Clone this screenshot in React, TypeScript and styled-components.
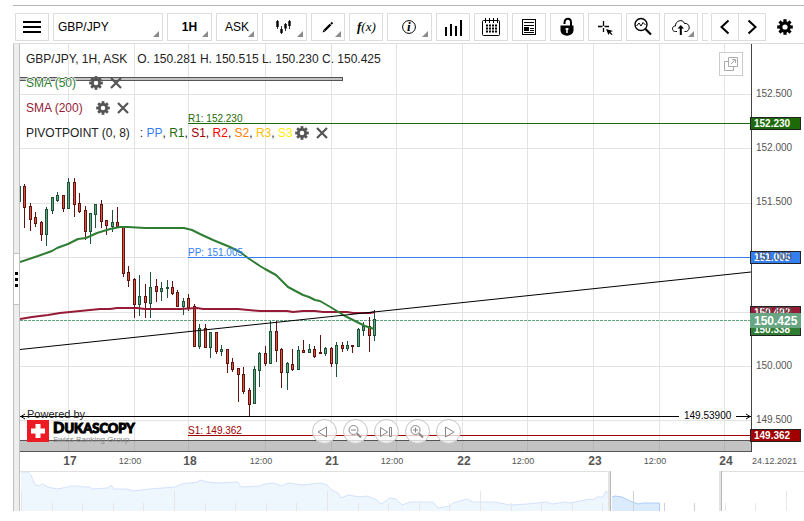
import React from "react";
import styled, { createGlobalStyle } from "styled-components";

const Global = createGlobalStyle`
  * { box-sizing: border-box; }
  body { margin: 0; background: #fff; font: 12px/16px "Liberation Sans", Arial, sans-serif; color: #222; }
  button, select { font: inherit; color: inherit; }
`;

const Page = styled.div`
  padding: 5px 0 0 13px;
`;

const Toolbar = styled.header`
  display: flex;
  padding: 7px 0 2px 2px;
  border-top: 1px solid #b4b4b4;
  border-bottom: 1px solid #dcdcdc;
`;

const Tools = styled.div`
  display: flex;
  flex: 1;
  min-width: 0;
  gap: 4px;
  margin-right: 3px;
  overflow: hidden;
`;

const Cell = styled.div<{ $w: number }>`
  position: relative;
  flex: 0 0 ${(p) => p.$w}px;
  height: 28px;
`;

const ToolButton = styled.button`
  display: flex;
  align-items: center;
  justify-content: center;
  width: 100%;
  height: 100%;
  padding: 0;
  border: 1px solid #dcdcdc;
  background: #fff;
  color: #000;
`;

const ToolSelect = styled.select<{ $bold?: boolean; $center?: boolean }>`
  width: 100%;
  height: 100%;
  padding: 0 4px;
  border: 1px solid #dcdcdc;
  border-radius: 0;
  background: #fff;
  color: #000;
  appearance: none;
  font-weight: ${(p) => (p.$bold ? 700 : 400)};
  text-align-last: ${(p) => (p.$center ? "center" : "left")};
`;

const Corner = styled.span`
  position: absolute;
  right: 4px;
  bottom: 4px;
  border-left: 6px solid transparent;
  border-bottom: 6px solid #8c8c8c;
  pointer-events: none;
`;

const Pager = styled.div`
  display: grid;
  grid-template-columns: 27px 28px;
  height: 28px;
  button + button { width: 28px; }
  button:first-child { width: 28px; }
`;

const SettingsButton = styled.button`
  display: flex;
  align-items: center;
  justify-content: center;
  width: 38px;
  height: 28px;
  padding: 0;
  border: 0;
  background: none;
  && { color: #000; }
`;

const Body = styled.main`
  display: grid;
  grid-template-columns: 7px minmax(0, 1fr);
`;

const Splitter = styled.div`
  display: flex;
  flex-direction: column;
  padding-top: 209px;
  border: solid #c0c0c0;
  border-width: 0 1px;
  background: #eee;
`;

const Grip = styled.button`
  display: flex;
  flex-direction: column;
  align-items: center;
  justify-content: center;
  gap: 3px;
  width: 100%;
  height: 52px;
  padding: 0;
  border: solid #c0c0c0;
  border-width: 1px 0;
  background: #fff;
  i { width: 3px; height: 3px; background: #000; }
`;

const Plot = styled.section`
  position: relative;
`;

const Drawing = styled.svg`
  display: block;
  width: 100%;
  height: auto;
  font-family: "Liberation Sans", Arial, sans-serif;
`;

const Legend = styled.div`
  position: absolute;
  top: 7px;
  left: 6px;
  display: grid;
  text-shadow: 1px 0 #fff, -1px 0 #fff, 0 1px #fff, 0 -1px #fff, 0 0 2px #fff;
`;

const Indicators = styled.div`
  display: grid;
  gap: 9px;
  margin-top: 8px;
`;

const LegendRow = styled.div<{ $color?: string }>`
  display: flex;
  align-items: center;
  height: 16px;
  color: ${(p) => p.$color ?? "#222"};
  white-space: pre;
`;

const LegendActions = styled.span<{ $gap: number }>`
  display: flex;
  gap: 6px;
  margin-left: ${(p) => p.$gap}px;
`;

const PlainButton = styled.button`
  display: flex;
  padding: 0;
  border: 0;
  background: none;
  && { color: #555; }
`;

const Tint = styled.span<{ $c: string }>`
  color: ${(p) => p.$c};
`;

const PopOut = styled.button`
  position: absolute;
  top: 8px;
  right: 61px;
  display: flex;
  align-items: center;
  justify-content: center;
  width: 24px;
  height: 24px;
  padding: 0;
  border: 1px solid #ccc;
  background: rgba(255, 255, 255, 0.8);
  && { color: #aaa; }
`;

const Navigation = styled.nav`
  position: absolute;
  right: 52px;
  bottom: 27px;
  left: 0;
  display: flex;
  justify-content: center;
  gap: 6px;
`;

const RoundButton = styled.button`
  display: flex;
  align-items: center;
  justify-content: center;
  width: 25px;
  height: 25px;
  padding: 0;
  border: 1px solid #c4c4c4;
  border-radius: 50%;
  background: rgba(255, 255, 255, 0.75);
  && { color: #888; }
`;

const Brand = styled.a`
  position: absolute;
  bottom: 26px;
  left: 7px;
  color: #222;
  text-decoration: none;
`;

const Powered = styled.div`
  font-size: 11px;
  line-height: 12px;
`;

const BrandRow = styled.div`
  display: flex;
  gap: 4px;
`;

const BrandName = styled.div`
  color: #000;
  font: 900 13px/14px Lato, sans-serif;
  -webkit-text-stroke: 1px #000;
  &::first-letter { font-size: 15px; }
`;

const Tagline = styled.div`
  color: #888;
  font-size: 8px;
  line-height: 10px;
`;

function Gear({ size }: { size: number }) {
  return (
    <svg width={size} height={size} viewBox="0 0 16 16" aria-hidden="true">
      <circle cx="8" cy="8" r="4.2" fill="none" stroke="currentColor" strokeWidth="3.2" />
      {[0, 45, 90, 135, 180, 225, 270, 315].map((a) => (
        <rect key={a} x="6.4" y="0.2" width="3.2" height="3.4" fill="currentColor" transform={`rotate(${a} 8 8)`} />
      ))}
    </svg>
  );
}

function Cross() {
  return (
    <svg width="14" height="14" viewBox="0 0 14 14" aria-hidden="true">
      <path d="M2 2L12 12M12 2L2 12" stroke="currentColor" strokeWidth="2.2" />
    </svg>
  );
}

function Glyph({ children, w = 20 }: { children: React.ReactNode; w?: number }) {
  return (
    <svg width={w} height="20" viewBox={`0 0 ${w} 20`} fill="none" stroke="currentColor" aria-hidden="true">
      {children}
    </svg>
  );
}

const icons = {
  menu: <Glyph><path d="M1 5H19M1 10H19M1 15H19" strokeWidth="2" /></Glyph>,
  candles: (
    <Glyph>
      <path d="M2.500 3V12M6.500 9V17M10.500 6V14M14.500 3V12" strokeWidth="0.800" />
      <path d="M2.500 4V10M6.500 12V16M10.500 7V11.500M14.500 4V9" strokeWidth="2.400" />
    </Glyph>
  ),
  pencil: (
    <Glyph>
      <path d="M6.500 13.500L12.500 7.500" strokeWidth="2.400" />
      <path d="M4.500 15.500L5.500 12.800L7.300 14.500Z" fill="currentColor" stroke="none" />
      <path d="M13 7L14.500 5.500" strokeWidth="2" />
    </Glyph>
  ),
  fx: (
    <Glyph w={24}>
      <text x="3" y="14" fill="currentColor" stroke="none" fontFamily="Liberation Serif, serif" fontSize="13" fontStyle="italic">
        <tspan fontWeight="700">f</tspan>(x)
      </text>
    </Glyph>
  ),
  info: (
    <Glyph>
      <circle cx="9" cy="10" r="6.400" />
      <text x="7" y="14" fill="currentColor" stroke="none" fontFamily="Liberation Serif, serif" fontSize="13" fontStyle="italic" fontWeight="700">i</text>
    </Glyph>
  ),
  bars: <Glyph><path d="M3 19V10M8 19V7M13 19V9M18 19V3" strokeWidth="2" /></Glyph>,
  calendar: (
    <Glyph>
      <rect x="1.500" y="3.500" width="17" height="15" rx="1" />
      <path d="M4.500 1V6M8.500 1V6M12.500 1V6M16.500 1V6" />
      <path d="M5 8.500H16M5 11.500H16M5 14.500H16" strokeWidth="2" strokeDasharray="2 1" />
    </Glyph>
  ),
  news: (
    <Glyph>
      <rect x="3.500" y="2.500" width="13" height="15" />
      <path d="M5 5.500H15M5 8.500H15M11 11.500H15M11 13.500H15M5 15.500H15" />
      <rect x="5" y="10" width="5" height="4" fill="currentColor" stroke="none" />
    </Glyph>
  ),
  lock: (
    <Glyph>
      <path d="M7.500 7V5.500C8 0.500 14 0.500 14 5.500V10" strokeWidth="2" />
      <path d="M3.500 8.500H16.500V13C16.500 20.500 3.500 20.500 3.500 13Z" fill="currentColor" stroke="none" />
      <path d="M10 11V16M8.500 12H11.500" stroke="#fff" strokeWidth="1.500" />
    </Glyph>
  ),
  crosshair: (
    <Glyph>
      <path d="M8.500 4V9M8.500 11V15M3 9.500H7.500M9.500 9.500H14" strokeWidth="1.300" />
      <path d="M11 12L18 14L15.500 15L17.500 17.500L16.500 18L14.500 16L13.500 18Z" fill="currentColor" stroke="none" />
    </Glyph>
  ),
  zoomChart: (
    <Glyph>
      <circle cx="8" cy="7.500" r="6" strokeWidth="1.400" />
      <path d="M3.500 9L6 6L8 9L10 5.500L12.500 8" />
      <path d="M12.500 12L18 17.500" strokeWidth="2.200" />
    </Glyph>
  ),
  cloud: (
    <Glyph>
      <path d="M6 14.500H4.500C0 14.500 1 8.500 4.500 9C4 3.500 12 1.500 13.500 6.500C18.500 5.500 20 13 15.500 14.500H13.500" />
      <path d="M9.800 18V10" strokeWidth="2" />
      <path d="M6.500 11.500L9.800 8L13 11.500Z" fill="currentColor" stroke="none" />
    </Glyph>
  ),
  left: <Glyph><path d="M13.500 3.500L6.500 10L13.500 16.500" strokeWidth="2" /></Glyph>,
  right: <Glyph><path d="M6.500 3.500L13.500 10L6.500 16.500" strokeWidth="2" /></Glyph>,
};

function Tool({ icon, label, w = 34, menu }: { icon: React.ReactNode; label: string; w?: number; menu?: boolean }) {
  return (
    <Cell $w={w}>
      <ToolButton aria-label={label}>{icon}</ToolButton>
      {menu && <Corner />}
    </Cell>
  );
}

// x, high, body top, body bottom, low, rising
type Candle = [number, number, number, number, number, number];
const candles: Candle[] = [
  [24, 184, 186, 207, 228, 0], [30, 203, 206, 219, 231, 0], [35, 212, 217, 223, 227, 0], [41, 221, 222, 234, 241, 0],
  [46, 207, 209, 234, 246, 1], [52, 197, 197, 210, 214, 1], [57, 192, 195, 200, 202, 1], [63, 195, 195, 208, 212, 0],
  [68, 178, 182, 208, 209, 1], [74, 178, 182, 204, 217, 0], [79, 193, 203, 211, 213, 0], [85, 206, 210, 231, 240, 0],
  [90, 213, 213, 231, 244, 1], [95, 204, 204, 214, 228, 1], [101, 200, 204, 221, 228, 0], [106, 220, 220, 225, 235, 0],
  [112, 210, 222, 226, 232, 1], [117, 207, 222, 226, 228, 0], [123, 226, 226, 273, 277, 0], [128, 266, 272, 280, 287, 0],
  [134, 278, 279, 304, 318, 0], [139, 275, 296, 304, 316, 1], [145, 284, 296, 302, 318, 0], [150, 272, 287, 303, 318, 1],
  [156, 279, 286, 291, 302, 0], [161, 282, 288, 291, 301, 1], [167, 280, 287, 288, 298, 1], [172, 281, 287, 293, 295, 0],
  [177, 290, 292, 306, 307, 0], [183, 298, 301, 306, 315, 1], [188, 294, 298, 307, 311, 0], [194, 304, 306, 346, 347, 0],
  [199, 324, 328, 346, 349, 1], [205, 324, 328, 347, 348, 0], [210, 332, 332, 347, 358, 1], [216, 332, 332, 351, 354, 0],
  [221, 345, 349, 351, 356, 1], [227, 349, 349, 363, 373, 0], [232, 358, 362, 369, 372, 0], [238, 368, 368, 374, 402, 0],
  [243, 367, 374, 391, 394, 0], [249, 388, 390, 404, 416, 0], [254, 366, 369, 403, 404, 1], [259, 352, 353, 370, 387, 1],
  [265, 346, 353, 363, 366, 0], [270, 321, 331, 363, 364, 1], [276, 321, 331, 350, 362, 0], [281, 348, 349, 372, 388, 0],
  [287, 362, 363, 372, 390, 1], [292, 349, 364, 369, 371, 0], [298, 346, 350, 369, 370, 1], [303, 340, 350, 352, 353, 0],
  [309, 344, 349, 352, 353, 1], [314, 346, 349, 356, 358, 0], [320, 335, 352, 353, 354, 0], [325, 347, 348, 353, 356, 1],
  [331, 347, 348, 363, 367, 0], [336, 342, 345, 363, 377, 1], [342, 342, 345, 348, 352, 0], [347, 341, 345, 348, 351, 1],
  [352, 345, 345, 346, 353, 0], [358, 328, 329, 346, 347, 1], [363, 322, 326, 330, 336, 1], [369, 317, 326, 335, 352, 0],
  [374, 310, 319, 335, 341, 1],
];

const sma50 =
  "20,262 38,256 52,251 57,248 68,244 78,239 86,238 97,233 110,229 120,227 128,227 145,228 162,228 173,228 184,228 192,230 200,234 213,240 230,247 240,252 248,258 260,266 265,269 276,275 282,281 288,287 303,295 309,297 315,300 320,301 332,308 345,316 357,322 365,326 374,329";
const sma200 =
  "20,319 32,317 48,315 60,313 70,312 80,311 100,309 110,309 117,308 137,308 145,309 180,309 197,308 203,309 238,309 260,311 287,311 293,312 303,311 315,311 323,312 347,312 353,313 370,313 375,312";

const columns = [68, 134, 188, 265, 331, 396, 462, 527, 593, 659, 724];
const rows = [94, 148, 203, 257, 312, 366, 420];
const priceLabels: [string, number][] = [
  ["152.500", 94], ["152.000", 148], ["151.500", 202], ["151.000", 257], ["150.500", 312], ["150.000", 366], ["149.500", 420],
];
const days: [string, number][] = [["17", 70], ["18", 190], ["21", 332], ["22", 464], ["23", 595], ["24", 726]];
const noons = [130, 261, 392, 523, 655];

function PriceTag({ y, fill, text }: { y: number; fill: string; text: string }) {
  return (
    <g>
      <rect x="750.5" y={y + 0.5} width="50" height="12" fill={fill} stroke="#222" />
      <text x="754" y={y + 10} fontSize="10" fontWeight="700" fill="#fff">{text}</text>
    </g>
  );
}

function PriceChart() {
  return (
    <Drawing viewBox="20 44 784 427" role="img" aria-label="GBP/JPY hourly candlestick chart">
      <g stroke="#e3e3e3">
        {columns.map((x) => <path key={x} d={`M${x + 0.5} 44V451`} />)}
        {rows.map((y) => <path key={y} d={`M20 ${y + 0.5}H751`} />)}
      </g>
      <rect x="19.500" y="77.500" width="323" height="3" fill="#c4c4c4" stroke="#555" />
      <rect x="20" y="440" width="731" height="11" fill="#888" fillOpacity="0.5" />
      <path d="M20 440.500H751M20 451.500H751" stroke="#555" />
      <path d="M20 320.500H751" stroke="#5ea37e" strokeDasharray="3 1" />
      <path d="M20.500 186V202" stroke="#1f5a3c" />
      {candles.map(([x, high, top, bottom, low, up]) => (
        <g key={x} stroke={up ? "#1c5238" : "#5e1512"} fill={up ? "#68a583" : "#e0523f"}>
          <path d={`M${x + 0.5} ${high}V${low}`} />
          <rect x={x - 0.5} y={top + 0.5} width="2" height={bottom - top} />
        </g>
      ))}
      <polyline points={sma200} fill="none" stroke="#951b36" strokeWidth="2" strokeLinejoin="round" />
      <polyline points={sma50} fill="none" stroke="#2f7d32" strokeWidth="2" strokeLinejoin="round" />
      <path d="M20 349.500L751 272" stroke="#000" />
      <path d="M188 123.500H751" stroke="#1d6b06" />
      <path d="M188 257.500H751" stroke="#347ff0" />
      <path d="M188 435.500H751" stroke="#a00000" />
      <g fontSize="10">
        <text x="188" y="122" fill="#1d6b06">R1: 152.230</text>
        <text x="188" y="256" fill="#347ff0">PP: 151.005</text>
        <text x="188" y="434" fill="#a00000">S1: 149.362</text>
        <text x="684" y="419" fill="#000">149.53900</text>
      </g>
      <path d="M20 416.500H679M736 416.500H751M25 414L21 416.500L25 419M746 414L750 416.500L746 419" fill="none" stroke="#000" />
      <path d="M751.500 44V452" stroke="#444" />
      <PriceTag y={117} fill="#1d6b06" text="152.230" />
      <PriceTag y={251} fill="#347ff0" text="151.005" />
      <PriceTag y={306} fill="#951b36" text="150.492" />
      <PriceTag y={323} fill="#2f7d32" text="150.338" />
      <PriceTag y={429} fill="#a00000" text="149.362" />
      <g fontSize="10" fill="#555">
        {priceLabels.map(([t, y]) => <text key={t} x="756" y={y + 3}>{t}</text>)}
      </g>
      <rect x="750" y="313" width="51" height="15" fill="#68a583" />
      <text x="754" y="325" fontSize="12" fontWeight="700" fill="#fff">150.425</text>
      <g fill="#555" textAnchor="middle">
        {days.map(([t, x]) => <text key={t} x={x} y="465" fontSize="12" fontWeight="700">{t}</text>)}
        {noons.map((x) => <text key={x} x={x} y="464" fontSize="9">12:00</text>)}
      </g>
      <text x="752" y="464" fontSize="9" fill="#555">24.12.2021</text>
    </Drawing>
  );
}

const history =
  "21,472 28,472 31,475 35,485 39,486 42,484 48,487 57,489 68,487 71,486 80,486 82,487 90,487 92,489 108,488 111,485 114,489 127,489 133,491 150,489 175,487 182,484 198,482 200,480 207,482 217,483 238,482 241,487 260,486 265,484 273,483 282,486 288,483 303,485 320,483 327,485 332,490 338,493 341,498 348,495 360,497 367,496 377,500 381,504 390,498 396,499 402,505 410,502 433,502 438,508 450,506 453,503 467,499 473,502 495,502 510,505 527,504 547,502 552,504 565,502 570,503 590,499 593,500 597,497 603,497 606,491 609,495";
const recent = "612,497 615,496 622,497 630,501 638,504 643,503 659,503";
const ticks = Array.from({ length: 26 }, (_, i) => ({ x: Math.round(21 + i * 30.6), major: i % 5 === 0 }));

function Overview() {
  return (
    <Drawing viewBox="20 471 784 40" role="img" aria-label="Price history overview">
      <polygon points={`21,511 ${history} 609,511`} fill="#eef6fe" />
      <polyline points={history} fill="none" stroke="#d3e2fb" />
      <polygon points={`612,511 ${recent} 659,511`} fill="#daebfd" />
      <polyline points={`${recent} 659.500,503 659.500,511`} fill="none" stroke="#adcdf8" />
      {ticks.map(({ x, major }) => (
        <path key={x} d={`M${x + 0.5} ${major ? 491 : 503}V511`} stroke={x > 610 && x < 720 ? "#d0d0d0" : "#e6e6e6"} />
      ))}
      <path d="M20 471.500H610M720 471.500H804" stroke="#e0e0e0" />
      <path d="M609.500 471V511M720.500 471V511" stroke="#e3e3e3" strokeWidth="3" />
      <path d="M610.500 471V511M721.500 471V511" stroke="#b8b8b8" />
    </Drawing>
  );
}

function Actions({ gap }: { gap: number }) {
  return (
    <LegendActions $gap={gap}>
      <PlainButton aria-label="Indicator settings"><Gear size={14} /></PlainButton>
      <PlainButton aria-label="Remove indicator"><Cross /></PlainButton>
    </LegendActions>
  );
}

export default function App() {
  return (
    <Page>
      <Global />
      <Toolbar>
        <Tools>
          <Tool icon={icons.menu} label="Menu" />
          <Cell $w={110}>
            <ToolSelect aria-label="Instrument"><option>GBP/JPY</option></ToolSelect>
            <Corner />
          </Cell>
          <Cell $w={45}>
            <ToolSelect aria-label="Period" $bold $center><option>1H</option></ToolSelect>
            <Corner />
          </Cell>
          <Cell $w={42}>
            <ToolSelect aria-label="Price side" $center><option>ASK</option></ToolSelect>
            <Corner />
          </Cell>
          <Tool icon={icons.candles} label="Chart type" w={45} menu />
          <Tool icon={icons.pencil} label="Draw" menu />
          <Tool icon={icons.fx} label="Indicators" />
          <Tool icon={icons.info} label="Information" w={45} menu />
          <Tool icon={icons.bars} label="Volume" />
          <Tool icon={icons.calendar} label="Calendar" />
          <Tool icon={icons.news} label="News" />
          <Tool icon={icons.lock} label="Lock" />
          <Tool icon={icons.crosshair} label="Crosshair" />
          <Tool icon={icons.zoomChart} label="Zoom" />
          <Tool icon={icons.cloud} label="Save" menu />
          <Tool icon={null} label="More" />
        </Tools>
        <Pager>
          <ToolButton aria-label="Scroll left">{icons.left}</ToolButton>
          <ToolButton aria-label="Scroll right">{icons.right}</ToolButton>
        </Pager>
        <SettingsButton aria-label="Settings"><Gear size={16} /></SettingsButton>
      </Toolbar>
      <Body>
        <Splitter>
          <Grip aria-label="Resize panel"><i /><i /><i /></Grip>
        </Splitter>
        <div>
          <Plot>
            <PriceChart />
            <Legend>
              <LegendRow>{"GBP/JPY, 1H, ASK   O. 150.281 H. 150.515 L. 150.230 C. 150.425"}</LegendRow>
              <Indicators>
                <LegendRow $color="#2f7d32">SMA (50)<Actions gap={13} /></LegendRow>
                <LegendRow $color="#951b36">SMA (200)<Actions gap={13} /></LegendRow>
                <LegendRow>
                  {"PIVOTPOINT (0, 8)   : "}
                  <Tint $c="#347ff0">PP</Tint>, <Tint $c="#1d6b06">R1</Tint>, <Tint $c="#a00000">S1</Tint>,{" "}
                  <Tint $c="#ff0000">R2</Tint>, <Tint $c="#ff7f00">S2</Tint>, <Tint $c="#ffbf00">R3</Tint>,{" "}
                  <Tint $c="#ffee00">S3</Tint>
                  <Actions gap={2} />
                </LegendRow>
              </Indicators>
            </Legend>
            <PopOut aria-label="Open in new window">
              <svg width="16" height="16" viewBox="0 0 16 16" fill="none" stroke="currentColor" aria-hidden="true">
                <path d="M5.500 1.500H14.500V10.500H5.500ZM5.500 5.500H1.500V14.500H10.500V10.500M8 8L12 4M9 3.500H12.500V7" />
              </svg>
            </PopOut>
            <Brand href="#">
              <Powered>Powered by</Powered>
              <BrandRow>
                <svg width="22" height="22" viewBox="0 0 22 22" aria-hidden="true">
                  <rect width="22" height="22" fill="#ed1c24" />
                  <path d="M11 4V18M4 11H18" stroke="#fff" strokeWidth="5" />
                </svg>
                <div>
                  <BrandName>DUKASCOPY</BrandName>
                  <Tagline>Swiss Banking Group</Tagline>
                </div>
              </BrandRow>
            </Brand>
            <Navigation aria-label="Chart navigation">
              <RoundButton aria-label="Back"><Glyph><path d="M12.500 5L4 10L12.500 15Z" /></Glyph></RoundButton>
              <RoundButton aria-label="Zoom out">
                <Glyph><circle cx="8.500" cy="8" r="4.500" /><path d="M6 8H11" /><path d="M12 11.500L16 15.500" strokeWidth="2" /></Glyph>
              </RoundButton>
              <RoundButton aria-label="Jump to latest">
                <Glyph><path d="M4.500 5.500L11.500 10L4.500 14.500ZM13.500 5.500H15.500V14.500H13.500Z" /></Glyph>
              </RoundButton>
              <RoundButton aria-label="Zoom in">
                <Glyph><circle cx="8.500" cy="8" r="4.500" /><path d="M6 8H11M8.500 5.500V10.500" /><path d="M12 11.500L16 15.500" strokeWidth="2" /></Glyph>
              </RoundButton>
              <RoundButton aria-label="Forward"><Glyph><path d="M7.500 5L16 10L7.500 15Z" /></Glyph></RoundButton>
            </Navigation>
          </Plot>
          <Overview />
        </div>
      </Body>
    </Page>
  );
}
